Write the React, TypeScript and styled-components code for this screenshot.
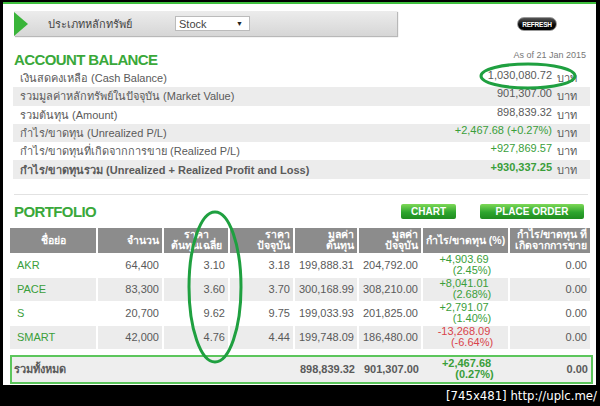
import styled, { createGlobalStyle } from 'styled-components';

const GlobalStyle = createGlobalStyle`
  html, body {
    margin: 0;
    padding: 0;
    background: #000;
  }
  body {
    width: 600px;
    height: 406px;
    overflow: hidden;
    font-family: "Liberation Sans", Arial, sans-serif;
  }
`;

const GREEN = '#3aa83a';
const TEXT = '#5a5a5a';

interface BalanceRow {
  label: string;
  value: string;
  positive?: boolean;
  strong?: boolean;
}

const balanceRows: BalanceRow[] = [
  { label: 'เงินสดคงเหลือ (Cash Balance)', value: '1,030,080.72' },
  { label: 'รวมมูลค่าหลักทรัพย์ในปัจจุบัน (Market Value)', value: '901,307.00' },
  { label: 'รวมต้นทุน (Amount)', value: '898,839.32' },
  { label: 'กำไร/ขาดทุน (Unrealized P/L)', value: '+2,467.68 (+0.27%)', positive: true },
  { label: 'กำไร/ขาดทุนที่เกิดจากการขาย (Realized P/L)', value: '+927,869.57', positive: true },
  { label: 'กำไร/ขาดทุนรวม (Unrealized + Realized Profit and Loss)', value: '+930,337.25', positive: true, strong: true },
];

interface Holding {
  symbol: string;
  volume: string;
  avgCost: string;
  price: string;
  cost: string;
  market: string;
  pl: string;
  plPct: string;
  realized: string;
}

const holdings: Holding[] = [
  { symbol: 'AKR', volume: '64,400', avgCost: '3.10', price: '3.18', cost: '199,888.31', market: '204,792.00', pl: '+4,903.69', plPct: '(2.45%)', realized: '0.00' },
  { symbol: 'PACE', volume: '83,300', avgCost: '3.60', price: '3.70', cost: '300,168.99', market: '308,210.00', pl: '+8,041.01', plPct: '(2.68%)', realized: '0.00' },
  { symbol: 'S', volume: '20,700', avgCost: '9.62', price: '9.75', cost: '199,033.93', market: '201,825.00', pl: '+2,791.07', plPct: '(1.40%)', realized: '0.00' },
  { symbol: 'SMART', volume: '42,000', avgCost: '4.76', price: '4.44', cost: '199,748.09', market: '186,480.00', pl: '-13,268.09', plPct: '(-6.64%)', realized: '0.00' },
];

const colWidths = [86, 64, 64, 63, 62, 62, 85, 80];

export default function App() {
  return (
    <>
      <GlobalStyle />
      <Screen>
        <Panel>
          <FilterBar>
            <BarArrow />
            <FilterLabel>ประเภทหลักทรัพย์</FilterLabel>
            <SelectBox>
              <span>Stock</span>
              <Caret>▼</Caret>
            </SelectBox>
          </FilterBar>
          <RefreshButton>REFRESH</RefreshButton>

          <TitleRow $top={15}>
            <SectionTitle>ACCOUNT BALANCE</SectionTitle>
            <AsOf>As of 21 Jan 2015</AsOf>
          </TitleRow>
          <BalanceList>
            {balanceRows.map((row, i) => (
              <BalanceItem key={row.label} $shaded={i % 2 === 1} $strong={row.strong}>
                <span>{row.label}</span>
                <BalanceValue>
                  <Amount $positive={row.positive}>{row.value}</Amount>
                  <Baht>บาท</Baht>
                </BalanceValue>
              </BalanceItem>
            ))}
          </BalanceList>

          <Divider />

          <TitleRow $top={8}>
            <SectionTitle>PORTFOLIO</SectionTitle>
            <ButtonGroup>
              <GreenButton $width={55}>CHART</GreenButton>
              <GreenButton $width={104}>PLACE ORDER</GreenButton>
            </ButtonGroup>
          </TitleRow>

          <PortfolioTable>
            <colgroup>
              {colWidths.map((w, i) => (
                <col key={i} style={{ width: w }} />
              ))}
            </colgroup>
            <thead>
              <tr>
                <HeadCell $align="center">ชื่อย่อ</HeadCell>
                <HeadCell>จำนวน</HeadCell>
                <HeadCell $align="center">ราคา<br />ต้นทุนเฉลี่ย</HeadCell>
                <HeadCell>ราคา<br />ปัจจุบัน</HeadCell>
                <HeadCell>มูลค่า<br />ต้นทุน</HeadCell>
                <HeadCell>มูลค่า<br />ปัจจุบัน</HeadCell>
                <HeadCell>กำไร/ขาดทุน (%)</HeadCell>
                <HeadCell>กำไร/ขาดทุน ที่<br />เกิดจากการขาย</HeadCell>
              </tr>
            </thead>
            <tbody>
              {holdings.map((h, i) => {
                const shaded = i % 2 === 1;
                return (
                  <tr key={h.symbol}>
                    <SymbolCell $shaded={shaded}>{h.symbol}</SymbolCell>
                    <DataCell $shaded={shaded}>{h.volume}</DataCell>
                    <DataCell $shaded={shaded}>{h.avgCost}</DataCell>
                    <DataCell $shaded={shaded}>{h.price}</DataCell>
                    <DataCell $shaded={shaded}>{h.cost}</DataCell>
                    <DataCell $shaded={shaded}>{h.market}</DataCell>
                    <PLCell $shaded={shaded} $loss={h.pl.startsWith('-')}>
                      {h.pl}
                      <br />
                      <PctLine>{h.plPct}</PctLine>
                    </PLCell>
                    <DataCell $shaded={shaded}>{h.realized}</DataCell>
                  </tr>
                );
              })}
            </tbody>
          </PortfolioTable>

          <TotalRow>
            <TotalLabel>รวมทั้งหมด</TotalLabel>
            <TotalValue>898,839.32</TotalValue>
            <TotalValue>901,307.00</TotalValue>
            <TotalPL>
              +2,467.68
              <br />
              <PctLine>(0.27%)</PctLine>
            </TotalPL>
            <TotalValue>0.00</TotalValue>
          </TotalRow>

          <Annotations width="593" height="383" viewBox="0 0 593 383">
            <ellipse cx="525" cy="74" rx="47" ry="12" />
            <ellipse cx="212" cy="285" rx="26" ry="75" />
          </Annotations>
        </Panel>
        <Caption>[745x481] http://uplc.me/</Caption>
      </Screen>
    </>
  );
}

const Screen = styled.div`
  width: 600px;
  height: 406px;
  padding-top: 2px;
  box-sizing: border-box;
  background: #000;
  display: flex;
  flex-direction: column;
`;

const Panel = styled.div`
  position: relative;
  margin-left: 3px;
  width: 593px;
  height: 383px;
  box-sizing: border-box;
  background: #fff;
  border-top: 2px solid #3fbf3f;
  padding: 7px 6px 0 7px;
  color: ${TEXT};
  font-size: 11px;
`;

const FilterBar = styled.div`
  width: 383px;
  height: 25px;
  margin-left: 4px;
  display: flex;
  align-items: center;
  background: linear-gradient(#ececec, #d6d6d6);
  box-shadow: 1px 1px 1px #b8b8b8;
`;

const BarArrow = styled.div`
  width: 0;
  height: 0;
  border-top: 12px solid transparent;
  border-bottom: 12px solid transparent;
  border-left: 14px solid #3ab53a;
`;

const FilterLabel = styled.span`
  margin-left: 20px;
  width: 127px;
  font-size: 11px;
  color: #444;
`;

const SelectBox = styled.div`
  width: 75px;
  height: 15px;
  box-sizing: border-box;
  display: flex;
  align-items: center;
  justify-content: space-between;
  padding: 0 6px 0 3px;
  background: #fff;
  border: 1px solid #bbb;
  font-size: 11px;
  color: #444;
`;

const Caret = styled.span`
  font-size: 7px;
  color: #222;
`;

const RefreshButton = styled.div`
  position: absolute;
  top: 13px;
  left: 514px;
  width: 40px;
  height: 14px;
  border-radius: 7px;
  background: linear-gradient(#555, #050505 60%);
  border: 1px solid #999;
  box-sizing: border-box;
  color: #fff;
  font-size: 6.5px;
  font-weight: bold;
  display: flex;
  align-items: center;
  justify-content: center;
  letter-spacing: -0.2px;
`;

const TitleRow = styled.div<{ $top: number }>`
  display: flex;
  justify-content: space-between;
  align-items: flex-start;
  margin-top: ${({ $top }) => $top}px;
  padding-left: 4px;
  height: 18px;
`;

const SectionTitle = styled.h2`
  margin: 0;
  font-size: 15px;
  font-weight: bold;
  color: ${GREEN};
  letter-spacing: -0.6px;
  line-height: 18px;
`;

const AsOf = styled.span`
  font-size: 9px;
  color: #777;
  margin-right: 4px;
  margin-top: -1px;
`;

const BalanceList = styled.div`
  display: flex;
  flex-direction: column;
  margin-left: 3px;
`;

const BalanceItem = styled.div<{ $shaded: boolean; $strong?: boolean }>`
  height: 18.3px;
  display: flex;
  align-items: center;
  justify-content: space-between;
  padding: 0 13px 0 7px;
  background: ${({ $shaded }) => ($shaded ? '#ececec' : '#fff')};
  font-weight: ${({ $strong }) => ($strong ? 'bold' : 'normal')};
  color: ${TEXT};
`;

const BalanceValue = styled.span`
  display: flex;
  gap: 5px;
`;

const Amount = styled.span<{ $positive?: boolean }>`
  color: ${({ $positive }) => ($positive ? '#3a9e3a' : TEXT)};
`;

const Baht = styled.span`
  font-weight: normal;
  color: ${TEXT};
`;

const Divider = styled.div`
  height: 1px;
  margin: 15px 2px 0 4px;
  background: #e2e2e2;
`;

const ButtonGroup = styled.div`
  display: flex;
  gap: 24px;
  margin-right: 6px;
  margin-top: 1px;
`;

const GreenButton = styled.div<{ $width: number }>`
  width: ${({ $width }) => $width}px;
  height: 15px;
  display: flex;
  align-items: center;
  justify-content: center;
  background: linear-gradient(#7ed957, #2ea52e 55%, #1f8c1f);
  border-radius: 2px;
  color: #fff;
  font-size: 10px;
  font-weight: bold;
`;

const PortfolioTable = styled.table`
  border-collapse: separate;
  border-spacing: 2px 1px;
  table-layout: fixed;
  width: 584px;
  margin: 6px 0 0 -2px;
`;

const HeadCell = styled.th<{ $align?: string }>`
  height: 25px;
  padding: 0 3px;
  background: #8c8c8c;
  color: #fff;
  font-size: 10.5px;
  font-weight: bold;
  line-height: 11px;
  text-align: ${({ $align }) => $align ?? 'right'};
  white-space: nowrap;
  overflow: hidden;
`;

const DataCell = styled.td<{ $shaded: boolean }>`
  height: 23px;
  padding: 0 3px 0 0;
  text-align: right;
  color: ${TEXT};
  background: ${({ $shaded }) => ($shaded ? '#ececec' : '#fff')};
  font-size: 11px;
  white-space: nowrap;
`;

const SymbolCell = styled(DataCell)`
  text-align: left;
  padding-left: 7px;
  color: #3a9e3a;
`;

const PLCell = styled(DataCell)<{ $loss: boolean }>`
  color: ${({ $loss }) => ($loss ? '#d9434a' : '#3a9e3a')};
  line-height: 11px;
  text-align: center;
`;

const PctLine = styled.span`
  padding-left: 16px;
`;

const TotalRow = styled.div`
  display: grid;
  grid-template-columns: 1fr 62px 62px 85px 80px;
  column-gap: 2px;
  align-items: center;
  margin-top: 5px;
  width: 583px;
  height: 29px;
  box-sizing: border-box;
  border: 2px solid #5cc65c;
  background: #eeeeee;
  font-weight: bold;
  font-size: 11px;
  color: ${TEXT};
`;

const TotalLabel = styled.span`
  padding-left: 2px;
`;

const TotalValue = styled.span`
  text-align: right;
  padding-right: 3px;
  white-space: nowrap;
`;

const TotalPL = styled.span`
  text-align: center;
  color: #3a9e3a;
  line-height: 11px;
`;

const Annotations = styled.svg`
  position: absolute;
  left: 0;
  top: -2px;
  pointer-events: none;
  ellipse {
    fill: none;
    stroke: #1fa040;
    stroke-width: 3;
  }
`;

const Caption = styled.div`
  height: 21px;
  display: flex;
  align-items: center;
  justify-content: flex-end;
  padding-right: 3px;
  color: #fff;
  font-family: "DejaVu Sans Condensed", "DejaVu Sans", sans-serif;
  font-size: 13px;
`;
